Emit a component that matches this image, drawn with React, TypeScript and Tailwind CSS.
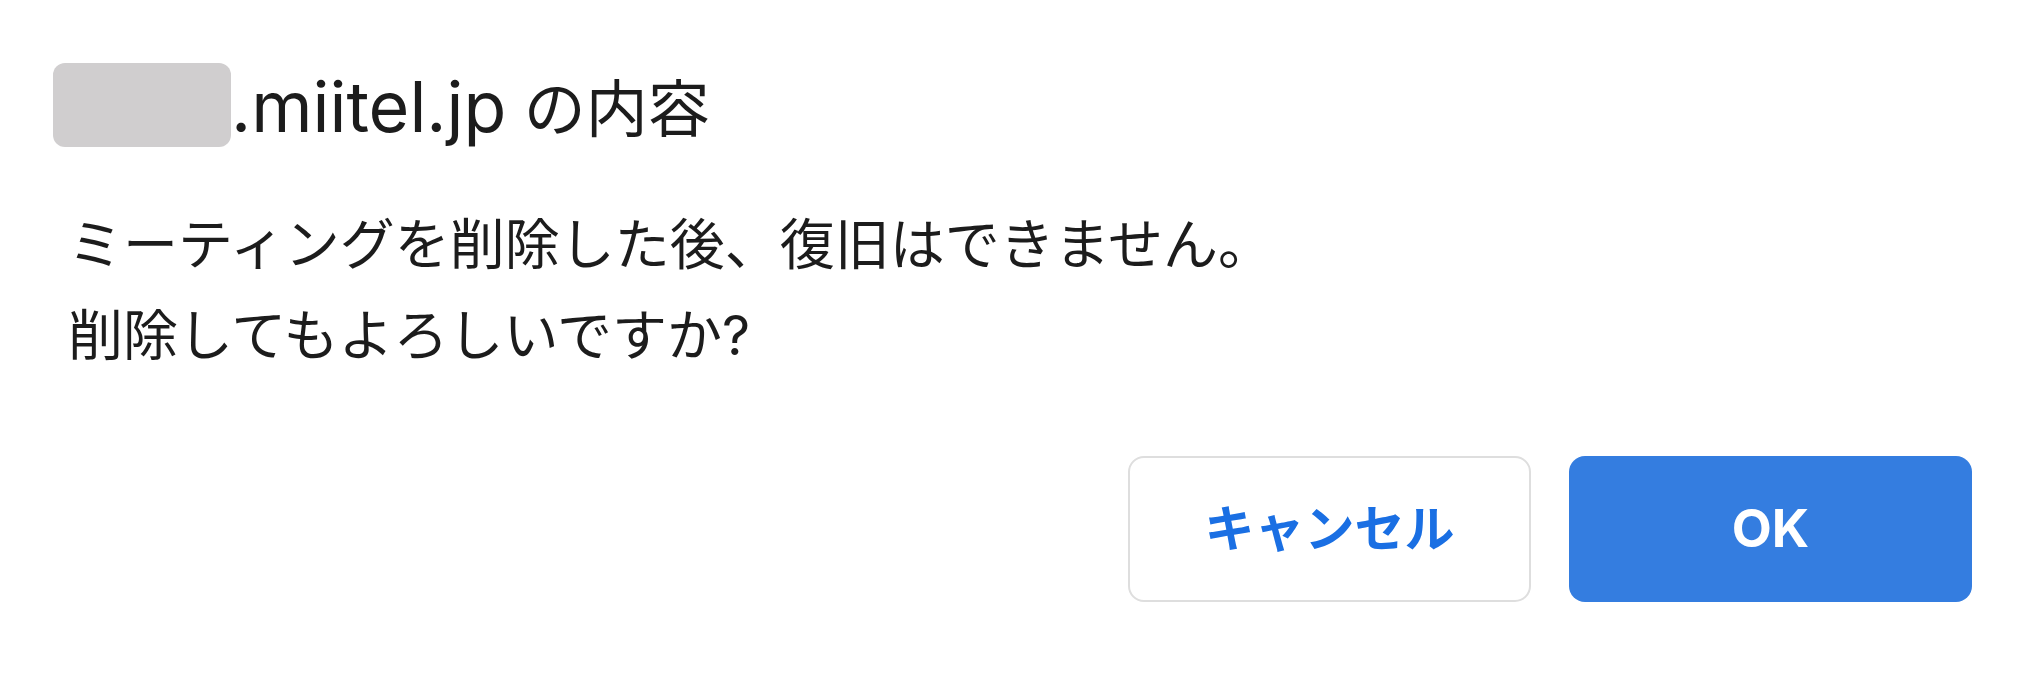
const jp = "font-['Inter','Noto_Sans_CJK_JP',sans-serif]";

export default function App() {
  return (
    <div className={`w-[2039px] h-[673px] bg-white pt-[63px] pl-[68px] pr-[67px] text-[#1c1c1c] ${jp}`}>
      {/* dialog title: host name is masked */}
      <div className="flex h-[84px] items-center">
        <span className="-ml-[15px] h-[84px] w-[178px] shrink-0 rounded-[12px] bg-[#d0cecf]" />
        <h1 className="mt-[4px] text-[62px] font-normal leading-none">
          <span className="text-[70px]">.miitel.jp</span> の内容
        </h1>
      </div>

      <p className="mt-[52px] text-[55px] leading-[91px]">
        ミーティングを削除した後、復旧はできません。
        <br />
        削除してもよろしいですか?
      </p>

      <div className="mt-[75px] flex justify-end gap-[38px]">
        <button className="h-[146px] w-[403px] rounded-[16px] border-2 border-[#dedede] bg-white text-[50px] font-bold text-[#1a6fe3]">
          キャンセル
        </button>
        <button className="h-[146px] w-[403px] rounded-[16px] bg-[#347de0] text-[52px] font-bold text-white">
          OK
        </button>
      </div>
    </div>
  );
}
